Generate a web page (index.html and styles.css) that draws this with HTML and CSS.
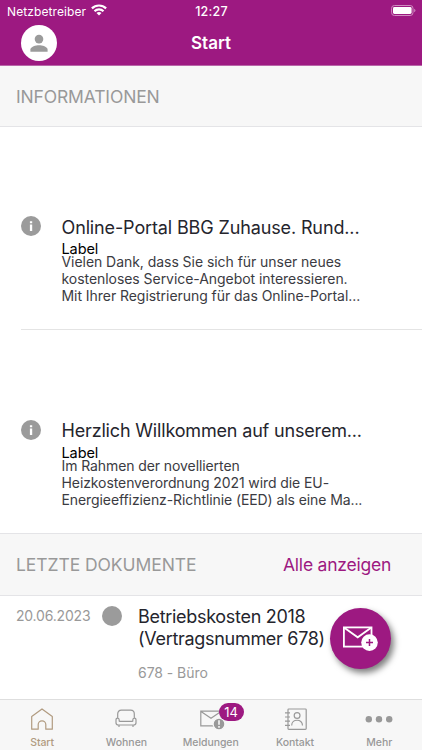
FILE: index.html
```html
<!DOCTYPE html>
<html lang="de">
<head>
<meta charset="utf-8">
<title>Start</title>
<link rel="stylesheet" href="styles.css">
</head>
<body>
<div class="app">
  <header class="top">
    <div class="status">
      <div class="carrier"><span>Netzbetreiber</span>
        <svg class="wifi" width="16" height="12" viewBox="0 0 16 12" fill="none" stroke="#fff" stroke-width="2.200"><path d="M.9 4.400a10.200 10.200 0 0 1 14.200 0M3.500 7.200a6.500 6.500 0 0 1 9 0"/><path d="M8 11.600 5.500 9.100a3.600 3.600 0 0 1 5 0Z" fill="#fff" stroke="none"/></svg>
      </div>
      <span class="clock">12:27</span>
      <svg class="battery" width="25" height="11" viewBox="0 0 25 11"><rect x=".6" y=".5" width="21.4" height="10" rx="2.8" fill="none" stroke="#cf8dc0"/><rect x="2" y="2" width="18.6" height="7" rx="1.4" fill="#fff"/><path d="M23.2 3.7q1.2.5 1.2 1.8t-1.2 1.8Z" fill="#cf8dc0"/></svg>
    </div>
    <div class="nav">
      <span class="avatar"><svg width="36" height="36" viewBox="0 0 36 36" fill="#9b9b9b"><circle cx="18" cy="14.1" r="4.3"/><path d="M9.4 26.8v-2.2c0-2.8 5.6-4.3 8.6-4.3s8.6 1.500 8.600 4.300v2.200Z"/></svg></span>
      <h1>Start</h1>
    </div>
  </header>
  <section class="section-head first"><h2 class="h-info">INFORMATIONEN</h2></section>
  <article class="news">
    <svg class="info" width="20" height="20" viewBox="0 0 20 20"><circle cx="10" cy="10" r="10" fill="#9b9b9b"/><path d="M8.900 5.200h2.300v2H8.900ZM8.900 8.600h2.300v6.300H8.900Z" fill="#fff"/></svg>
    <div class="copy">
      <h3 class="t1">Online-Portal BBG Zuhause. Rund...</h3>
      <div class="label">Label</div>
      <p><span class="a1">Vielen Dank, dass Sie sich für unser neues</span><br><span class="a2">kostenloses Service-Angebot interessieren.</span><br><span class="a3">Mit Ihrer Registrierung für das Online-Portal...</span></p>
    </div>
  </article>
  <article class="news second">
    <svg class="info" width="20" height="20" viewBox="0 0 20 20"><circle cx="10" cy="10" r="10" fill="#9b9b9b"/><path d="M8.900 5.200h2.300v2H8.900ZM8.900 8.600h2.300v6.300H8.900Z" fill="#fff"/></svg>
    <div class="copy">
      <h3 class="t2">Herzlich Willkommen auf unserem...</h3>
      <div class="label">Label</div>
      <p><span class="b1">Im Rahmen der novellierten</span><br><span class="b2">Heizkostenverordnung 2021 wird die EU-</span><br><span class="b3">Energieeffizienz-Richtlinie (EED) als eine Ma...</span></p>
    </div>
  </article>
  <section class="section-head docs-head"><h2 class="h-docs">LETZTE DOKUMENTE</h2><a class="all">Alle anzeigen</a></section>
  <article class="doc">
    <time>20.06.2023</time><i class="dot"></i>
    <div class="doc-copy"><h3><span class="d1">Betriebskosten 2018</span><br><span class="d2">(Vertragsnummer 678)</span></h3><p>678 - Büro</p></div>
  </article>
  <button class="fab" aria-label="Neue Nachricht"><svg width="61" height="61" viewBox="0 0 61 61" fill="none" stroke="#fff" stroke-width="1.800"><rect x="13.900" y="19.400" width="27.600" height="19.200"/><path d="m14.300 19.800 13.400 9.500 13.400-9.500"/><circle cx="39.500" cy="34.600" r="8.300" fill="#fff" stroke="none"/><path d="M39.500 31.100v7M36 34.600h7" stroke="#9d1981" stroke-width="1.500"/></svg></button>
  <nav class="tabs">
    <a class="tab active"><svg width="28" height="28" viewBox="0 0 28 28" stroke-linejoin="round"><path d="M3.700 10.500 14 2.900l10.300 7.600v12.700h-6.500v-4.600a3.800 3.800 0 0 0-7.600 0v4.600H3.700Z"/></svg><span class="l1">Start</span></a>
    <a class="tab"><svg width="28" height="28" viewBox="0 0 28 28"><path d="M5.700 12V8.100c0-2.400 1.300-3.900 3.700-3.900h9.200c2.400 0 3.700 1.500 3.700 3.900V12M7.200 15.400h13.600M7.200 15.400v-1.300c0-2.700-3.200-2.600-3.200-.2v2.900c0 1.400.9 2.200 2.300 2.200h15.400c1.400 0 2.300-.8 2.300-2.200v-2.900c0-2.400-3.200-2.500-3.200.2v1.300M7 19v1.900M21 19v1.900"/></svg><span class="l2">Wohnen</span></a>
    <a class="tab"><svg width="28" height="28" viewBox="0 0 28 28"><path d="M3.800 5.200h20.400v14.700H3.800ZM4 5.500l10 6.700 10-6.700"/><circle cx="22" cy="18" r="5.900" fill="#999" stroke="#f7f7f7"/><path d="M22 14.200v4.600M22 20.100v1.700" stroke="#f7f7f7" stroke-width="1.600"/></svg><span class="l3">Meldungen</span><b class="badge">14</b></a>
    <a class="tab"><svg width="28" height="28" viewBox="0 0 28 28"><rect x="7" y="3" width="18.200" height="20.300" rx=".8"/><circle cx="16.100" cy="9.500" r="2.900"/><path d="M10.700 19.500c0-7 10.800-7 10.800 0M4 6.800h5M4 11h5M4 15.200h5M4 19.400h5"/></svg><span class="l4">Kontakt</span></a>
    <a class="tab"><svg width="28" height="28" viewBox="0 0 28 28"><g fill="#999" stroke="none"><circle cx="3.800" cy="13.200" r="3.200"/><circle cx="14" cy="13.200" r="3.200"/><circle cx="24.200" cy="13.200" r="3.200"/></g></svg><span class="l5">Mehr</span></a>
  </nav>
</div>
</body>
</html>
```
FILE: styles.css
```css
* { box-sizing: border-box; }
body { margin: 0; background: #fff; font-family: Inter, "Liberation Sans", sans-serif; color: #25252d; }
h1, h2, h3, p { margin: 0; font-weight: 400; }
span, h2, h3, time, a { white-space: nowrap; }
svg { display: block; }
.app { position: relative; width: 422px; height: 750px; overflow: hidden; display: flex; flex-direction: column; }
.top { height: 66px; flex: none; background: #9d1981; color: #fff; border-bottom: 1px solid #b866a8; }
.status { height: 21px; display: grid; grid-template-columns: 1fr auto 1fr; align-items: center; padding: 0 6px 0 7px; }
.carrier { display: flex; align-items: center; gap: 5px; font-size: 12px; letter-spacing: .1px; }
.carrier span, .clock { padding-top: 1px; }
.wifi { margin-top: -1px; }
.clock { font-size: 12.500px; font-weight: 500; letter-spacing: .2px; }
.battery { justify-self: end; }
.nav { height: 44px; display: grid; grid-template-columns: 1fr auto 1fr; align-items: center; padding-left: 20.500px; padding-right: 20.500px; }
.avatar { width: 36px; height: 36px; background: #fff; border-radius: 50%; }
h1 { font-size: 17px; font-weight: 600; }
.section-head { flex: none; display: flex; align-items: center; justify-content: space-between; background: #f7f7f7; border-bottom: 1px solid #e4e4e7; padding: 0 31px 0 16px; color: #999; }
.first { height: 61px; }
.docs-head { height: 63px; border-top: 1px solid #e4e4e7; }
.section-head h2 { font-size: 17.500px; }
.h-info { letter-spacing: -.15px; }
.h-docs { letter-spacing: -.07px; }
.all { color: #9d1981; font-size: 17.500px; letter-spacing: -.23px; }
.news { height: 203px; flex: none; margin-left: 21px; padding-top: 89px; display: flex; gap: 20.500px; border-bottom: 1px solid #e4e4e4; }
.news.second { border-bottom: 0; padding-top: 90px; }
.info { flex: none; }
.copy h3 { font-size: 18px; line-height: 22px; letter-spacing: -.13px; }
.copy h3.t1 { padding-top: 1px; margin-bottom: -1px; }
.copy h3.t2 { letter-spacing: -.17px; }
.label { height: 15px; font-size: 14.500px; line-height: 21px; color: #000; letter-spacing: -.1px; }
.copy p { font-size: 14px; line-height: 17px; color: #3b3b42; letter-spacing: -.05px; }
.second p { letter-spacing: -.09px; }
.doc { display: flex; padding-top: 10px; padding-left: 16px; }
time { width: 86px; font-size: 14px; line-height: 19px; color: #999; letter-spacing: -.2px; }
.dot { width: 20px; height: 20px; border-radius: 50%; background: #9b9b9b; }
.doc-copy { margin-left: 16px; margin-top: -.5px; }
.doc-copy h3 { font-size: 18px; line-height: 22px; letter-spacing: -.3px; }
.doc-copy p { font-size: 14px; line-height: 20px; margin-top: 13.500px; color: #999; letter-spacing: -.05px; }
.fab { position: absolute; left: 330px; top: 608px; width: 61px; height: 61px; padding: 0; border: 0; border-radius: 50%; background: #9d1981; box-shadow: 3px 4px 6px rgba(0,0,0,.5); }
.tabs { position: absolute; left: 0; right: 0; bottom: 0; height: 51px; background: #f7f7f7; border-top: 1px solid #dedede; display: grid; grid-template-columns: repeat(5, 84.300px); }
.tab { position: relative; display: flex; flex-direction: column; align-items: center; padding-top: 6px; color: #999; font-size: 10.500px; font-weight: 500; line-height: 14px; }
.tab span { margin-top: 2px; }
.l1 { letter-spacing: -.1px; }
.l3, .l4 { letter-spacing: -.08px; }
.tab svg { fill: none; stroke: #999; stroke-width: 1.200; }
.tab.active { color: #b19b80; }
.tab.active svg { stroke: #b19b80; }
.badge { position: absolute; left: 50px; top: 3px; width: 25px; height: 18px; border-radius: 9px; background: #9d1981; color: #fff; font-size: 13px; font-weight: 400; line-height: 18px; text-align: center; }
```
